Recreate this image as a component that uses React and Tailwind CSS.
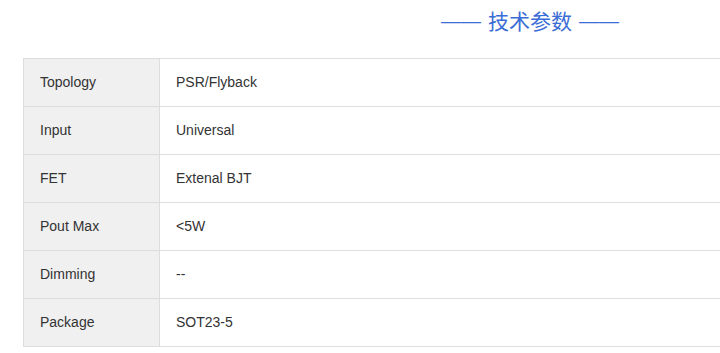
const rows = [
    ['Topology', 'PSR/Flyback'],
    ['Input', 'Universal'],
    ['FET', 'Extenal BJT'],
    ['Pout Max', '<5W'],
    ['Dimming', '--'],
    ['Package', 'SOT23-5'],
]

export default function App() {
    return (
        <div className="w-[720px] h-[353px] overflow-hidden bg-white font-['Liberation_Sans',Arial,sans-serif]">
            <div className="w-[1014px] ml-[23px]">
                {/* Section title */}
                <div className="h-[42px] flex items-center justify-center gap-[7px] text-[#3b6dd6]">
                    <span className="text-[20px] font-['Liberation_Sans',sans-serif]">——</span>
                    <span className="text-[21px] font-['Noto_Sans_CJK_SC',sans-serif]">技术参数</span>
                    <span className="text-[20px] font-['Liberation_Sans',sans-serif]">——</span>
                </div>

                {/* Spec table */}
                <div className="mt-[16px] border-l border-t border-[#dddddd] text-[14px] text-[#333333]">
                    {rows.map(([label, value]) => (
                        <div key={label} className="grid grid-cols-[136px_1fr] h-[48px]">
                            <div className="flex items-center pl-4 bg-[#f0f0f0] border-r border-b border-[#dddddd]">
                                {label}
                            </div>
                            <div className="flex items-center pl-4 border-r border-b border-[#dddddd]">
                                {value}
                            </div>
                        </div>
                    ))}
                </div>
            </div>
        </div>
    )
}
